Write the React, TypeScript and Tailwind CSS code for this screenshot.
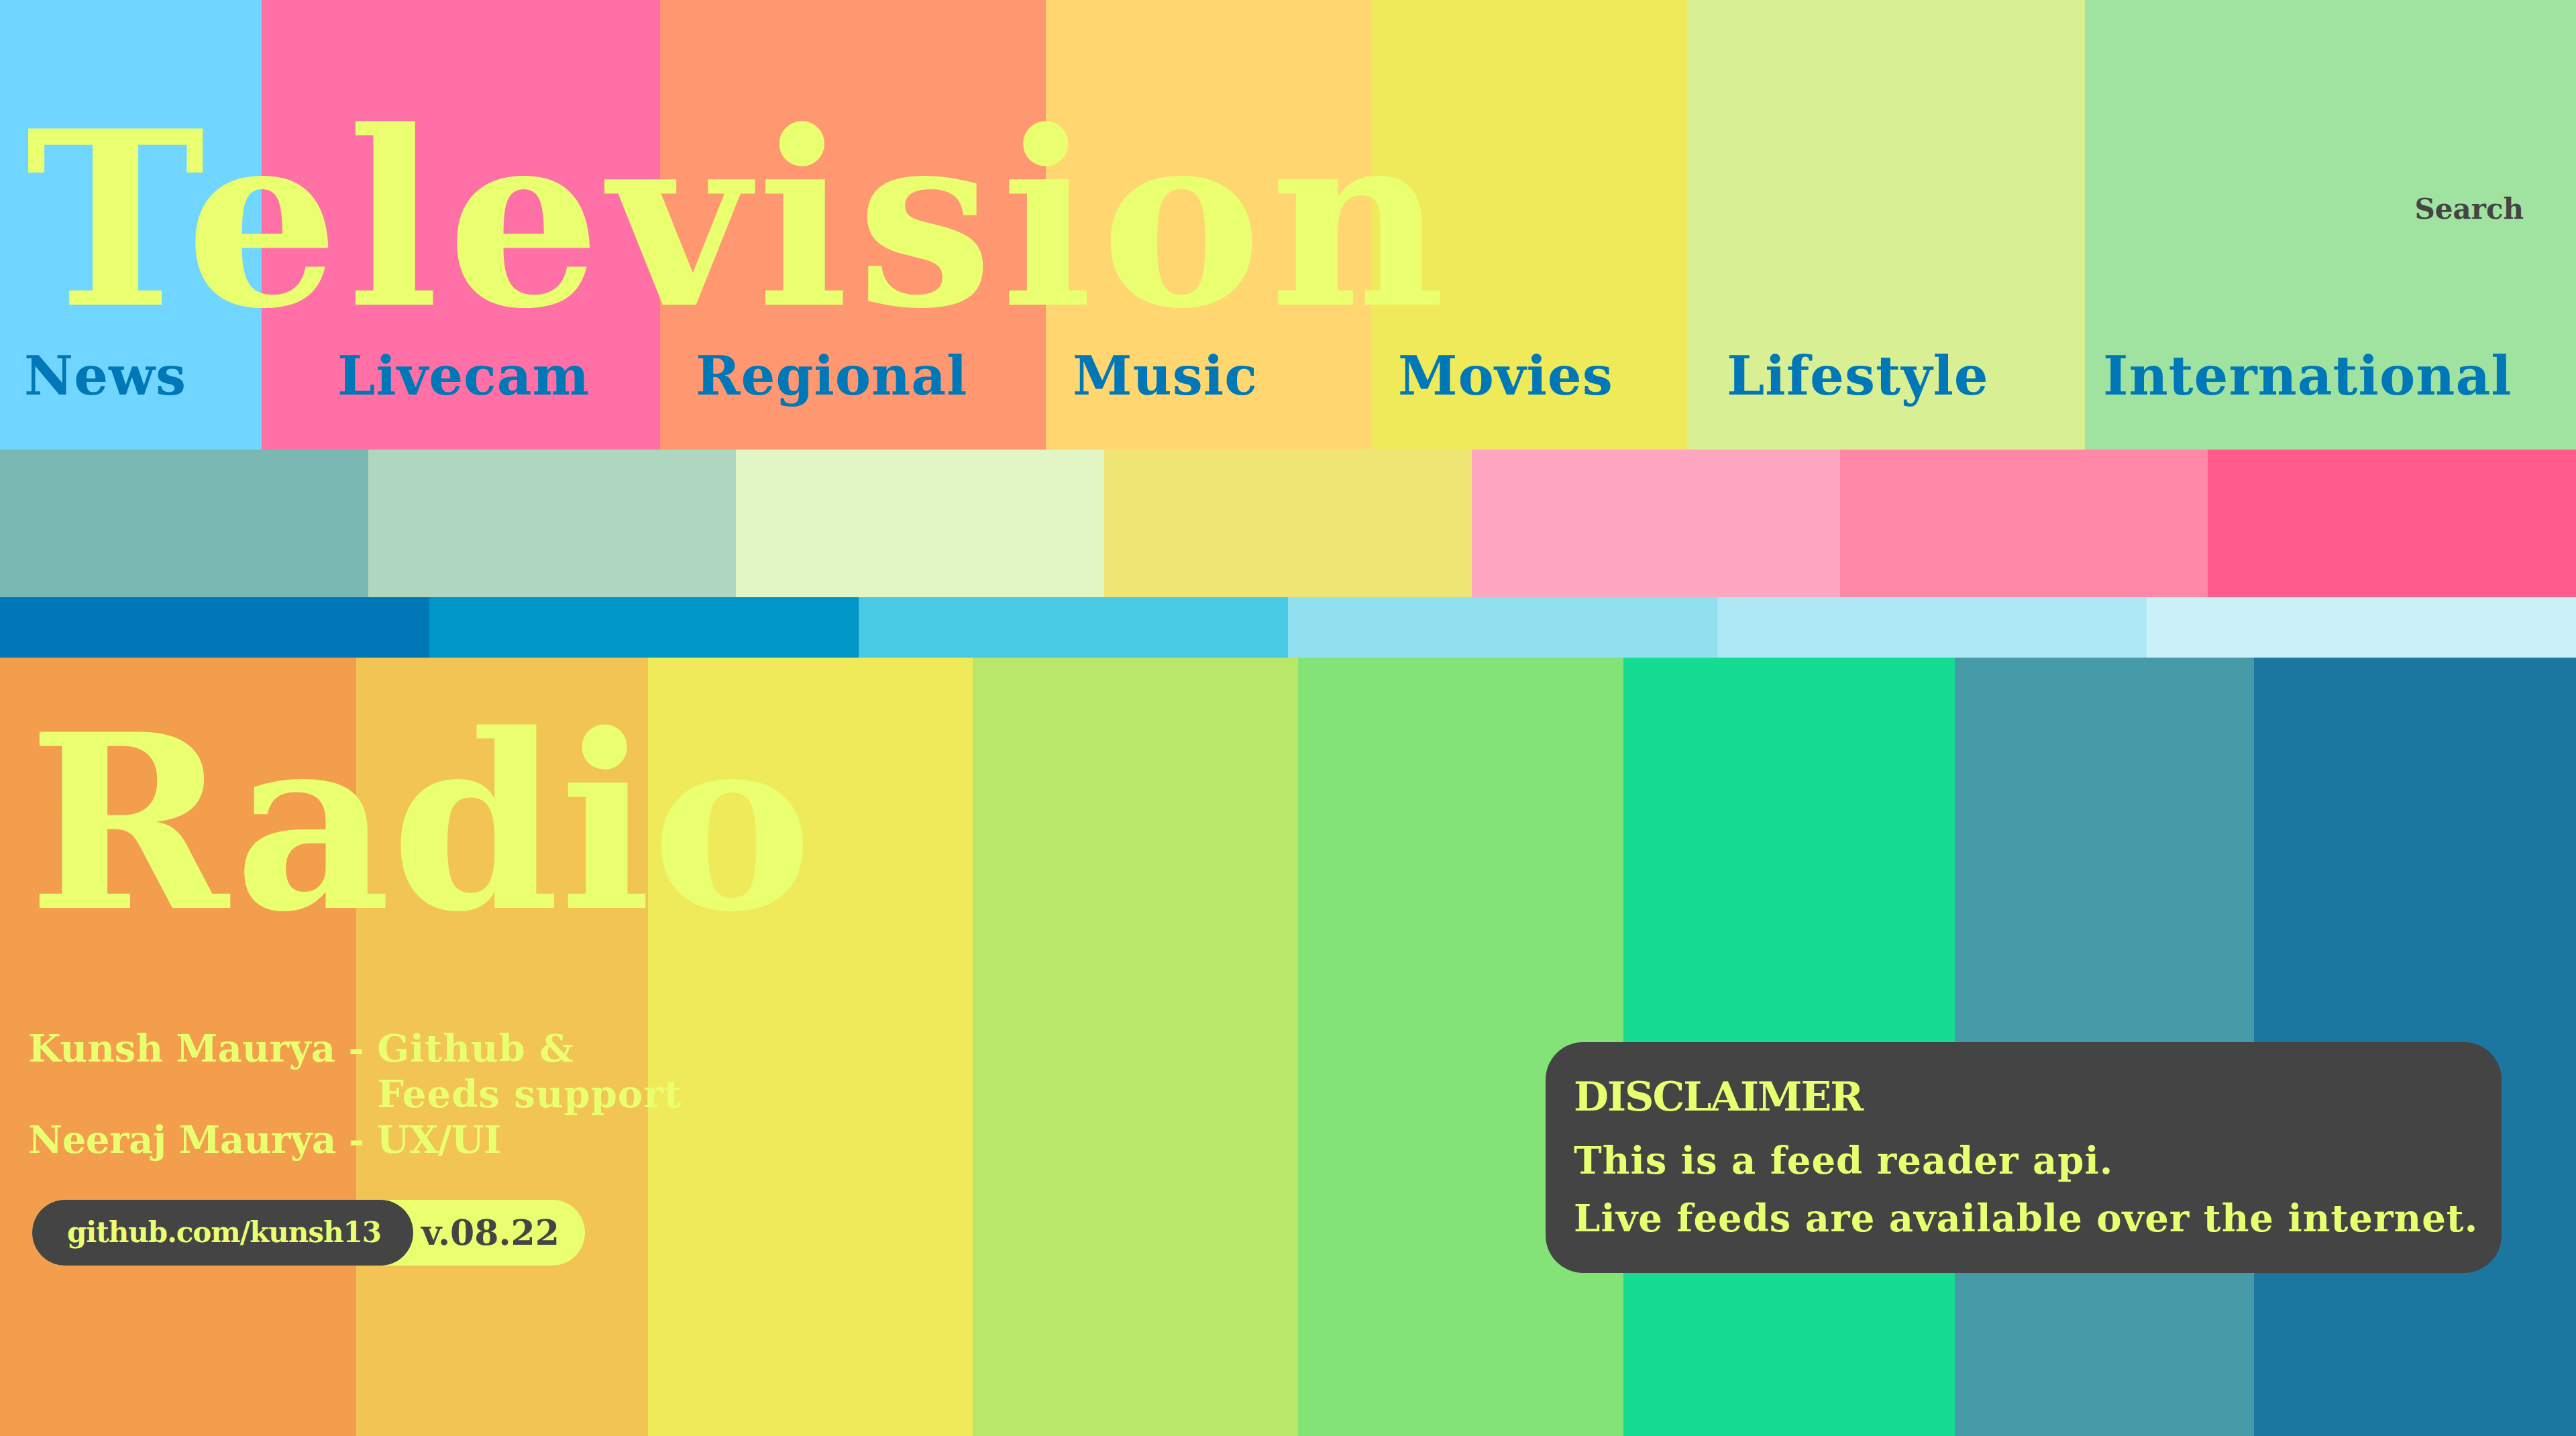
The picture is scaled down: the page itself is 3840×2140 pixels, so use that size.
import React from "react";

const topCols = [
  { label: "News", w: "w-[390px]", bg: "bg-[#70d6ff]", pl: "pl-[36px]" },
  { label: "Livecam", w: "w-[594px]", bg: "bg-[#ff70a6]", pl: "pl-[113px]" },
  { label: "Regional", w: "w-[575px]", bg: "bg-[#ff9770]", pl: "pl-[53px]" },
  { label: "Music", w: "w-[485px]", bg: "bg-[#ffd670]", pl: "pl-[40px]" },
  { label: "Movies", w: "w-[471px]", bg: "bg-[#efea5a]", pl: "pl-[40px]" },
  { label: "Lifestyle", w: "w-[593px]", bg: "bg-[#d9ef93]", pl: "pl-[59px]" },
  { label: "International", w: "w-[732px]", bg: "bg-[#a0e3a0]", pl: "pl-[27px]" },
];

const midCols = [
  "bg-[#7ab8b4]",
  "bg-[#afd6bf]",
  "bg-[#e1f5c5]",
  "bg-[#efe575]",
  "bg-[#ffa6c1]",
  "bg-[#ff87a8]",
  "bg-[#ff5c8d]",
];

const blueCols = [
  "bg-[#0077b6]",
  "bg-[#0096c7]",
  "bg-[#48cae4]",
  "bg-[#90e0ef]",
  "bg-[#ade8f4]",
  "bg-[#caf0f8]",
];

const bottomCols = [
  { w: "w-[531px]", bg: "bg-[#f29e4c]" },
  { w: "w-[435px]", bg: "bg-[#f1c453]" },
  { w: "w-[484px]", bg: "bg-[#efea5a]" },
  { w: "w-[485px]", bg: "bg-[#b9e769]" },
  { w: "w-[485px]", bg: "bg-[#83e377]" },
  { w: "w-[494px]", bg: "bg-[#16db93]" },
  { w: "w-[446px]", bg: "bg-[#479aa8]" },
  { w: "w-[480px]", bg: "bg-[#1b76a0]" },
];

export default function App() {
  return (
    <div className="w-[3840px] h-[2140px] flex flex-col overflow-hidden font-['DejaVu_Serif',serif] font-bold">
      {/* Television section */}
      <header className="relative h-[670px] flex">
        {topCols.map((c) => (
          <div key={c.label} className={`${c.w} ${c.bg} ${c.pl} h-full flex items-end pb-[70px]`}>
            <a href="#" className="text-[80px] leading-none text-[#0077b6] tracking-[1px]">
              {c.label}
            </a>
          </div>
        ))}
        <div className="absolute top-0 left-0 right-0 flex justify-between pointer-events-none">
          <h1 className="pl-[38px] pt-[148px] text-[360px] leading-none text-[#e9ff70] tracking-[12px]">
            Television
          </h1>
          <span className="pt-[291px] pr-[78px] text-[42px] leading-none text-[#444444]">
            Search
          </span>
        </div>
      </header>

      {/* middle band */}
      <div className="h-[220px] flex">
        {midCols.map((bg, i) => (
          <div key={i} className={`flex-1 ${bg}`} />
        ))}
      </div>

      {/* blue band */}
      <div className="h-[90px] flex">
        {blueCols.map((bg, i) => (
          <div key={i} className={`flex-1 ${bg}`} />
        ))}
      </div>

      {/* Radio section */}
      <section className="relative flex-1 flex">
        {bottomCols.map((c, i) => (
          <div key={i} className={`${c.w} ${c.bg} h-full`} />
        ))}
        <div className="absolute inset-0 flex flex-col pt-[67px] pl-[42px] pr-[111px]">
          <h2 className="text-[360px] leading-none text-[#e9ff70] tracking-[0px]">Radio</h2>
          <div className="mt-[121px] flex justify-between items-start">
            <div className="flex flex-col">
              <div className="text-[56px] leading-[68px] text-[#e9ff70] tracking-[0px]">
                <div className="flex">
                  <span className="whitespace-pre">Kunsh Maurya - </span>
                  <span className="tracking-[1px]">
                    Github &amp;
                    <br />
                    Feeds support
                  </span>
                </div>
                <div className="whitespace-pre tracking-[-0.5px]">Neeraj Maurya - UX/UI</div>
              </div>
              <div className="mt-[56px] ml-[6px] self-start flex items-center h-[98px] rounded-full bg-[#e9ff70]">
                <a
                  href="#"
                  className="h-full flex items-center pl-[52px] pr-[48px] rounded-full bg-[#444444] text-[42px] leading-none text-[#e9ff70] tracking-[-1px]"
                >
                  github.com/kunsh13
                </a>
                <span className="pl-[12px] pr-[38px] text-[52px] leading-none text-[#444444]">
                  v.08.22
                </span>
              </div>
            </div>
            <div className="mt-[25px] w-[1425px] h-[344px] rounded-[56px] bg-[#444444] pl-[42px] pt-[51px] text-[#e9ff70]">
              <div className="text-[60px] leading-none tracking-[-2px]">DISCLAIMER</div>
              <p className="mt-[22px] text-[56px] leading-[86px] tracking-[1px]">
                This is a feed reader api.
                <br />
                Live feeds are available over the internet.
              </p>
            </div>
          </div>
        </div>
      </section>
    </div>
  );
}
